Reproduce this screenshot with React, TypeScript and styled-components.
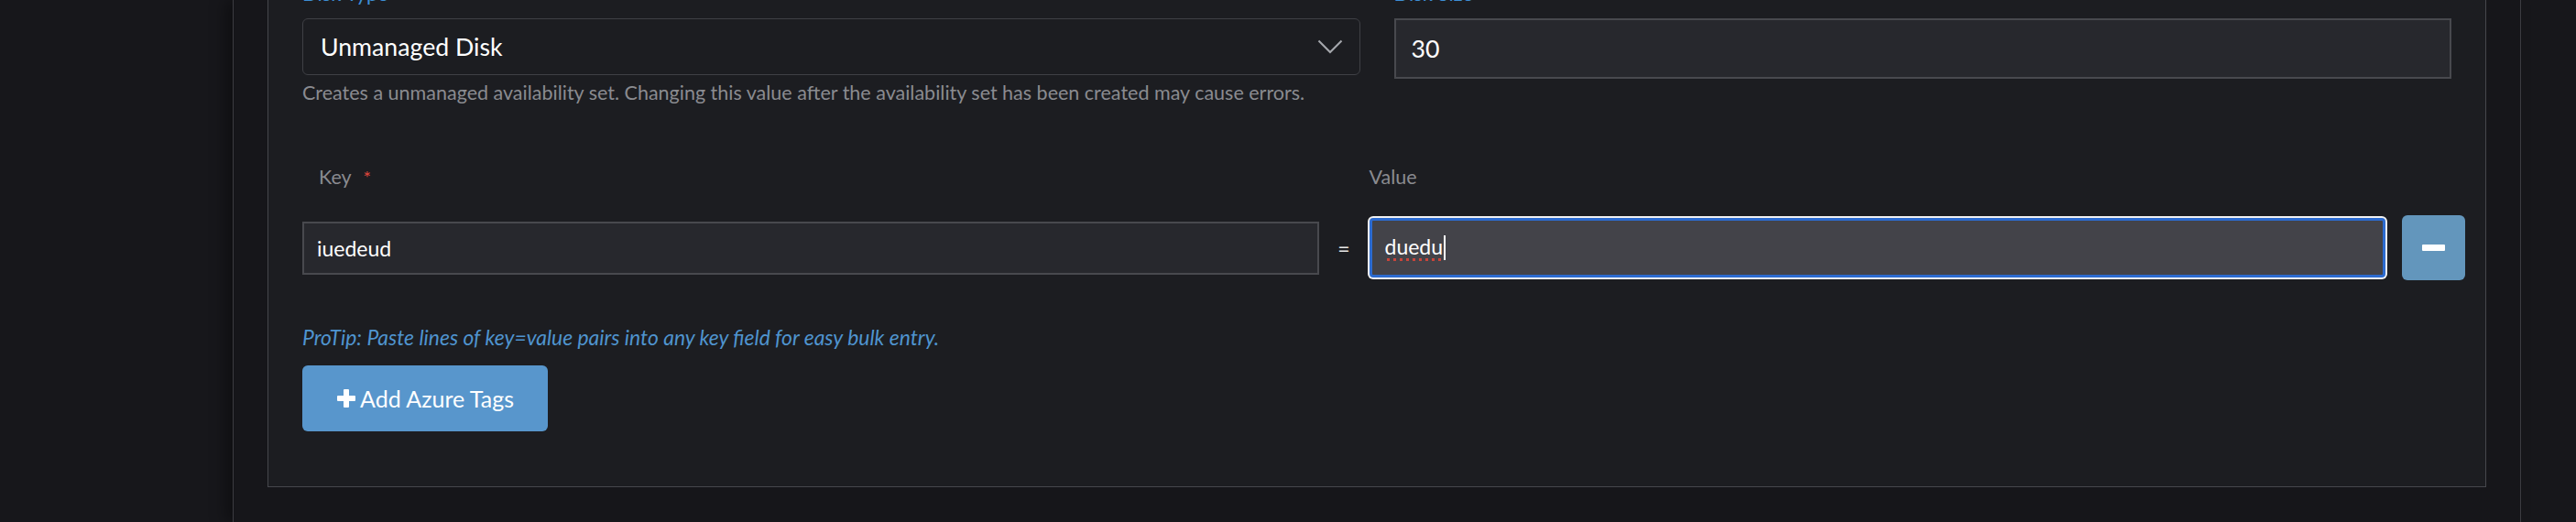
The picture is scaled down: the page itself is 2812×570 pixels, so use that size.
import React from "react";
import styled, { createGlobalStyle } from "styled-components";

const GlobalStyle = createGlobalStyle`
  html, body {
    margin: 0;
    padding: 0;
    height: 100%;
    overflow: hidden;
    background: #17171b;
  }
  body {
    font-family: Lato, "Liberation Sans", sans-serif;
  }
`;

const Page = styled.div`
  display: flex;
  height: 570px;
`;

const Panel = styled.main`
  margin-left: 254px;
  width: 2498px;
  box-sizing: border-box;
  height: 100%;
  padding: 0 37px;
  background: #16161a;
  border-left: 1px solid #3c3c41;
  border-right: 1px solid #3c3c41;
  box-shadow: -8px 0 16px rgba(0, 0, 0, 0.35);
`;

const Section = styled.div`
  margin-top: -38px;
  padding: 17px 37px 60px 37px;
  background: #1c1d21;
  border: 1px solid #46474c;
`;

const TopGrid = styled.div`
  display: grid;
  grid-template-columns: 1fr 1fr;
  column-gap: 37px;
  align-items: start;
`;

const FieldLabel = styled.div`
  height: 26px;
  margin-bottom: 14px;
  font-size: 22px;
  line-height: 26px;
  color: #3d8fd6;
`;

const Select = styled.div`
  height: 62px;
  box-sizing: border-box;
  display: flex;
  align-items: center;
  justify-content: space-between;
  padding: 0 18px 0 19px;
  border: 1px solid #3f4045;
  border-radius: 6px;
  font-size: 26.7px;
  color: #ffffff;
`;

const TextInput = styled.input<{ $h: number }>`
  display: block;
  width: 100%;
  height: ${(p) => p.$h}px;
  box-sizing: border-box;
  margin: 0;
  padding: 0 ${(p) => (p.$h > 60 ? 17 : 14)}px;
  background: #27282d;
  border: 2px solid #48494e;
  border-radius: 0;
  outline: none;
  font-family: Lato, "Liberation Sans", sans-serif;
  font-size: ${(p) => (p.$h > 60 ? 26.7 : 23)}px;
  color: #ffffff;
`;

const Help = styled.div`
  margin-top: 7px;
  font-size: 21.5px;
  line-height: 25px;
  color: #8a8b90;
`;

const KeyValue = styled.div`
  margin-top: 67px;
  margin-right: -15px;
`;

const KVGrid = styled.div<{ $top?: number }>`
  display: grid;
  grid-template-columns: 1fr 55px 1fr 87px;
  align-items: center;
  margin-top: ${(p) => p.$top ?? 0}px;
`;

const KVLabel = styled.div<{ $indent?: number }>`
  padding-left: ${(p) => p.$indent ?? 0}px;
  font-size: 21.5px;
  line-height: 25px;
  color: #8a8b90;
`;

const Required = styled.span`
  margin-left: 13px;
  color: #e0463c;
  font-size: 20px;
`;

const Equals = styled.div`
  text-align: center;
  font-size: 23px;
  color: #e8e8e8;
`;

const FocusedField = styled.div`
  height: 65px;
  box-sizing: border-box;
  display: flex;
  align-items: center;
  padding: 0 13px 0 14px;
  background: #434349;
  border: 3px solid #2c6bd0;
  border-radius: 4px;
  box-shadow: 0 0 0 2px #f2f2f2;
  font-size: 23px;
  color: #ffffff;
`;

const Misspelled = styled.span`
  padding-bottom: 3px;
  background-image: radial-gradient(circle, #c9453b 1.6px, transparent 2px);
  background-size: 7px 5px;
  background-repeat: repeat-x;
  background-position: 0 100%;
`;

const Caret = styled.span`
  display: inline-block;
  width: 1.5px;
  height: 27px;
  margin-left: 1px;
  background: #ffffff;
`;

const RemoveButton = styled.button`
  justify-self: end;
  width: 69px;
  height: 71px;
  display: flex;
  align-items: center;
  justify-content: center;
  padding: 0;
  border: none;
  border-radius: 6px;
  background: #6396bc;
`;

const ProTip = styled.div`
  margin-top: 50px;
  font-size: 22.9px;
  line-height: 25px;
  font-style: italic;
  color: #4f94cf;
`;

const AddButton = styled.button`
  margin-top: 18px;
  height: 72px;
  display: inline-flex;
  align-items: center;
  gap: 5px;
  padding: 0 37px 0 38px;
  border: none;
  border-radius: 6px;
  background: #5896cc;
  font-family: Lato, "Liberation Sans", sans-serif;
  font-size: 25px;
  color: #ffffff;
`;

function Chevron() {
  return (
    <svg width="28" height="16" viewBox="0 0 28 16">
      <polyline
        points="1.5,1.5 14,14 26.5,1.5"
        fill="none"
        stroke="#a4a7ac"
        strokeWidth="2.1"
      />
    </svg>
  );
}

function PlusIcon() {
  return (
    <svg width="20" height="20" viewBox="0 0 20 20">
      <rect x="7" y="0" width="6" height="20" rx="1" fill="#fff" />
      <rect x="0" y="7" width="20" height="6" rx="1" fill="#fff" />
    </svg>
  );
}

function MinusIcon() {
  return (
    <svg width="25" height="7" viewBox="0 0 25 7">
      <rect x="0" y="0" width="25" height="7" rx="1" fill="#fff" />
    </svg>
  );
}

export default function App() {
  return (
    <>
      <GlobalStyle />
      <Page>
        <Panel>
          <Section>
            <TopGrid>
              <div>
                <FieldLabel>Disk Type</FieldLabel>
                <Select>
                  <span>Unmanaged Disk</span>
                  <Chevron />
                </Select>
                <Help>
                  Creates a unmanaged availability set. Changing this value
                  after the availability set has been created may cause errors.
                </Help>
              </div>
              <div>
                <FieldLabel>Disk Size</FieldLabel>
                <TextInput $h={66} readOnly value="30" />
              </div>
            </TopGrid>

            <KeyValue>
              <KVGrid>
                <KVLabel $indent={18}>
                  Key<Required>*</Required>
                </KVLabel>
                <div />
                <KVLabel>Value</KVLabel>
                <div />
              </KVGrid>
              <KVGrid $top={29}>
                <TextInput $h={58} readOnly value="iuedeud" />
                <Equals>=</Equals>
                <FocusedField>
                  <Misspelled>duedu</Misspelled>
                  <Caret />
                </FocusedField>
                <RemoveButton aria-label="Remove">
                  <MinusIcon />
                </RemoveButton>
              </KVGrid>
            </KeyValue>

            <ProTip>
              ProTip: Paste lines of key=value pairs into any key field for
              easy bulk entry.
            </ProTip>
            <AddButton>
              <PlusIcon />
              Add Azure Tags
            </AddButton>
          </Section>
        </Panel>
      </Page>
    </>
  );
}
